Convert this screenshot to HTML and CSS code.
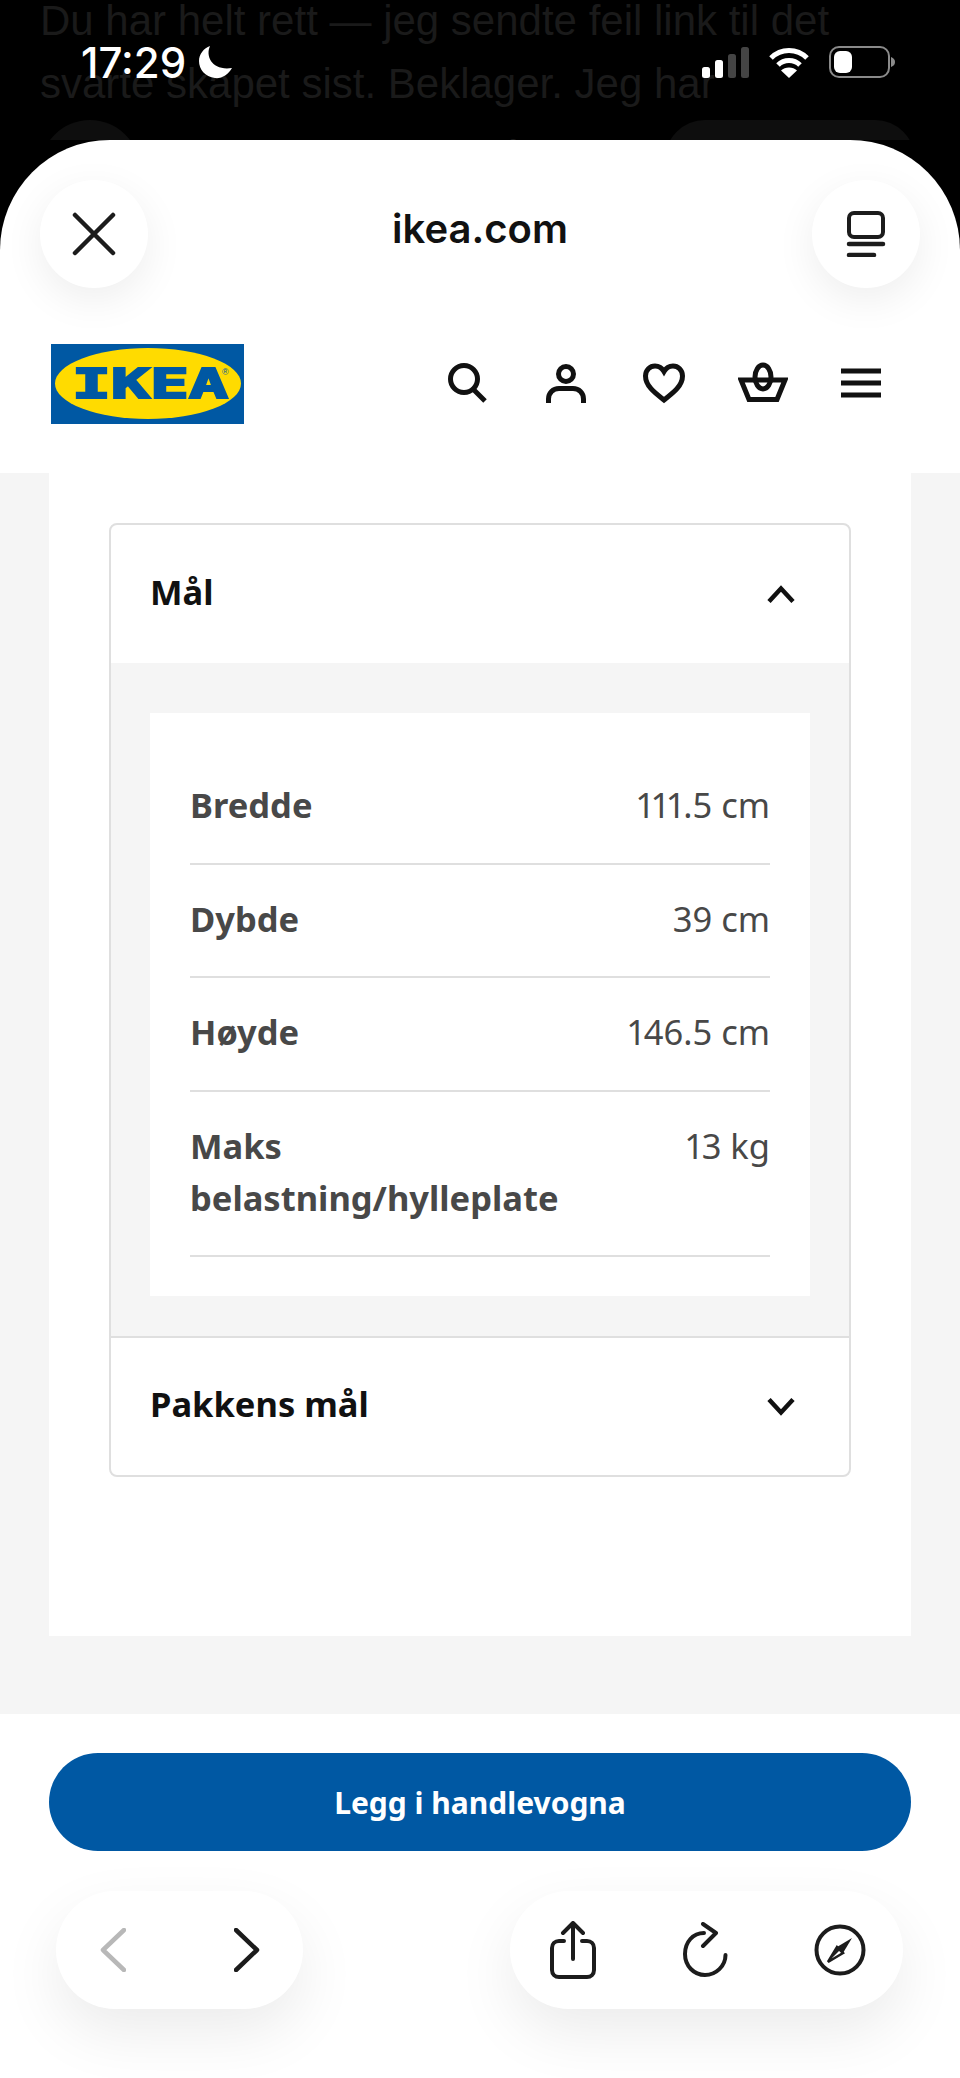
FILE: index.html
```html
<!DOCTYPE html>
<html lang="no">
<head>
  <meta charset="UTF-8" />
  <meta name="viewport" content="width=device-width, initial-scale=1.0" />
  <title>ikea.com</title>
  <link rel="stylesheet" href="styles.css">
</head>
<body>
  <!-- Chat behind the sheet -->
  <div class="backdrop">
    <p class="backdrop-line">Du har helt rett — jeg sendte feil link til det</p>
    <p class="backdrop-line">svarte skapet sist. Beklager. Jeg har</p>
    <div class="backdrop-row">
      <span class="backdrop-dot"></span>
      <p class="backdrop-line">alt i klokt ut IKEA-nå</p>
      <span class="backdrop-pill"></span>
    </div>
  </div>

  <!-- Status bar -->
  <div class="status">
    <div class="status-left">
      <span class="status-time">17:29</span>
      <svg class="moon" width="34" height="34" viewBox="0 0 34 34"><path d="M11 1C6 12 14 26 33 23C29 30 22 34 16 33C6 32 0 24 0 16C0 9 5 3 11 1Z" fill="#fff"/></svg>
    </div>
    <div class="status-right">
      <svg width="47" height="31" viewBox="0 0 47 31">
        <rect x="0" y="20" width="8" height="11" rx="2.5" fill="#fff"/>
        <rect x="13" y="13" width="8" height="18" rx="2.5" fill="#fff"/>
        <rect x="26" y="7" width="8" height="24" rx="2.5" fill="#444"/>
        <rect x="39" y="0" width="8" height="31" rx="2.5" fill="#444"/>
      </svg>
      <svg width="40" height="31" viewBox="0 0 40 31" fill="none" stroke="#fff" stroke-width="5">
        <path d="M2 11C12 1 28 1 38 11"/>
        <path d="M9 18C15 12 25 12 31 18"/>
        <path d="M20 31L12 23.500C16 19.500 24 19.500 28 23.500Z" fill="#fff" stroke="none"/>
      </svg>
      <svg width="66" height="32" viewBox="0 0 66 32">
        <rect x="1" y="1" width="59" height="30" rx="9" fill="none" stroke="#8a8a8a" stroke-width="2"/>
        <rect x="5" y="5" width="18" height="22" rx="6" fill="#fff"/>
        <path d="M62 11C65 12 66 14 66 16C66 18 65 20 62 21Z" fill="#8a8a8a"/>
      </svg>
    </div>
  </div>

  <div class="sheet">
    <!-- Browser top bar -->
    <div class="browser-top">
      <button class="round-btn">
        <svg width="44" height="44" viewBox="0 0 44 44" fill="none" stroke="#1c1c1c" stroke-width="4.500" stroke-linecap="round"><path d="M3 3L41 41M41 3L3 41"/></svg>
      </button>
      <span class="browser-host">ikea.com</span>
      <button class="round-btn">
        <svg width="40" height="46" viewBox="0 0 40 46" fill="none" stroke="#1c1c1c" stroke-width="4" stroke-linecap="round"><rect x="3" y="2" width="34" height="24" rx="5"/><path d="M3 33H37" stroke-width="4.500"/><path d="M3 44H28" stroke-width="4.500"/></svg>
      </button>
    </div>

    <!-- IKEA site header -->
    <header class="site-header">
      <svg class="logo" width="193" height="80" viewBox="0 0 193 80">
        <rect width="193" height="80" fill="#0058a3"/>
        <ellipse cx="97" cy="39.500" rx="93" ry="35.500" fill="#ffdb00"/>
        <text class="logo-text" x="21" y="54" textLength="156" lengthAdjust="spacingAndGlyphs">IKEA</text>
        <text class="logo-mark" x="171" y="31">®</text>
      </svg>
      <nav class="site-icons">
        <svg width="50" height="50" viewBox="0 0 50 50" fill="none" stroke="#111" stroke-width="5"><circle cx="22" cy="20" r="13.500"/><path d="M31 30L43 42"/></svg>
        <svg width="50" height="50" viewBox="0 0 50 50" fill="none" stroke="#111" stroke-width="5"><circle cx="25" cy="15" r="7.500"/><path d="M7.500 44V40C7.500 34 12 29.500 18 29.500H32C38 29.500 42.500 34 42.500 40V44"/></svg>
        <svg width="50" height="50" viewBox="0 0 50 50" fill="none" stroke="#111" stroke-width="5"><path d="M25 41C16 34 6.500 27 6.500 17C6.500 11 11 7 16 7C20 7 23 9 25 12.500C27 9 30 7 34 7C39 7 43.500 11 43.500 17C43.500 27 34 34 25 41Z"/></svg>
        <svg width="50" height="50" viewBox="0 0 50 50" fill="none" stroke="#111" stroke-width="5"><path d="M3 21H47L39 40.500H11Z"/><ellipse cx="25" cy="18" rx="8" ry="12"/></svg>
        <svg width="50" height="50" viewBox="0 0 50 50" fill="#111"><rect x="5" y="9.500" width="40" height="5"/><rect x="5" y="21.500" width="40" height="5"/><rect x="5" y="33.500" width="40" height="5"/></svg>
      </nav>
    </header>

    <!-- Product page -->
    <main class="page">
      <div class="page-card">
        <section class="accordion">
          <div class="accordion-head">
            <h2>Mål</h2>
            <svg width="28" height="18" viewBox="0 0 28 18" fill="none" stroke="#111" stroke-width="4.500"><path d="M2 16.500L14 3.500L26 16.500"/></svg>
          </div>
          <div class="accordion-body">
            <dl class="dims">
              <div class="dim-row"><dt>Bredde</dt><dd>111.5 cm</dd></div>
              <div class="dim-row"><dt>Dybde</dt><dd>39 cm</dd></div>
              <div class="dim-row"><dt>Høyde</dt><dd>146.5 cm</dd></div>
              <div class="dim-row"><dt>Maks belastning/hylleplate</dt><dd>13 kg</dd></div>
            </dl>
          </div>
          <div class="accordion-head accordion-head-closed">
            <h2>Pakkens mål</h2>
            <svg width="28" height="18" viewBox="0 0 28 18" fill="none" stroke="#111" stroke-width="4.500"><path d="M2 1.500L14 14.500L26 1.500"/></svg>
          </div>
        </section>
      </div>
    </main>

    <!-- Bottom bar -->
    <div class="bottom">
      <button class="buy-btn">Legg i handlevogna</button>
      <div class="toolbar">
        <div class="tool-pill tool-pill-nav">
          <span class="tool"><svg width="26" height="44" viewBox="0 0 26 44" fill="none" stroke="#b8b8b8" stroke-width="4.500" stroke-linecap="round" stroke-linejoin="round"><path d="M24 2L3 22L24 42"/></svg></span>
          <span class="tool"><svg width="26" height="44" viewBox="0 0 26 44" fill="none" stroke="#1c1c1c" stroke-width="4.500" stroke-linecap="round" stroke-linejoin="round"><path d="M2 2L23 22L2 42"/></svg></span>
        </div>
        <div class="tool-pill tool-pill-actions">
          <span class="tool"><svg width="46" height="58" viewBox="0 0 46 58" fill="none" stroke="#1c1c1c" stroke-width="4" stroke-linecap="round" stroke-linejoin="round"><path d="M14 20H9C5 20 2 23 2 27V49C2 53 5 56 9 56H37C41 56 44 53 44 49V27C44 23 41 20 37 20H32"/><path d="M23 38V3M13 12L23 2L33 12"/></svg></span>
          <span class="tool"><svg width="50" height="56" viewBox="0 0 50 56" fill="none" stroke="#1c1c1c" stroke-width="4" stroke-linecap="round" stroke-linejoin="round"><path d="M22 11C11 11 3 20 3 32C3 44 12 53 23 53C34 53 43.500 44 43.500 33"/><path d="M21 2L34 11L21 24"/></svg></span>
          <span class="tool"><svg width="52" height="52" viewBox="0 0 52 52"><circle cx="26" cy="26" r="23.500" fill="none" stroke="#1c1c1c" stroke-width="4"/><path d="M38 14L29 29L23 23Z" fill="#1c1c1c"/><path d="M14 38L23 23L29 29Z" fill="none" stroke="#1c1c1c" stroke-width="2.500"/><path d="M14 38L23 23L26 26Z" fill="#1c1c1c"/></svg></span>
        </div>
      </div>
    </div>
  </div>
</body>
</html>
```

FILE: styles.css
```css
* {
  box-sizing: border-box;
}
html, body {
  margin: 0;
  height: 2078px;
  overflow: hidden;
}
body {
  position: relative;
  background-color: #000;
  font-family: "Noto Sans", sans-serif;
}
p, h2, dl, dd {
  margin: 0;
}
button {
  border: 0;
  padding: 0;
  font-family: inherit;
}

/* Chat behind the sheet */
.backdrop {
  height: 140px;
  padding: 0 40px;
  overflow: hidden;
}
.backdrop-line {
  font-family: "Liberation Sans", sans-serif;
  font-size: 42px;
  line-height: 63px;
  margin-top: -11px;
  margin-bottom: 11px;
  color: #1a1a1a;
  white-space: nowrap;
}
.backdrop-row {
  display: flex;
  align-items: flex-start;
  margin-top: -6px;
}
.backdrop-row .backdrop-line {
  margin: 8px 0 0 7px;
  width: 518px;
}
.backdrop-dot {
  width: 100px;
  height: 100px;
  border-radius: 50%;
  background-color: #0e0e0e;
}
.backdrop-pill {
  width: 250px;
  height: 100px;
  border-radius: 40px;
  background-color: #0e0e0e;
}

/* Status bar */
.status {
  position: absolute;
  top: 40px;
  left: 81px;
  right: 65px;
  height: 44px;
  display: flex;
  justify-content: space-between;
  align-items: center;
}
.status-left {
  display: flex;
  align-items: center;
  gap: 13px;
}
.status-time {
  font-family: Inter, sans-serif;
  font-weight: 500;
  font-size: 42px;
  color: #fff;
}
.status-right {
  display: flex;
  align-items: center;
  gap: 20px;
}

/* Sheet */
.sheet {
  height: 1938px;
  background-color: #fff;
  border-radius: 110px 110px 0 0;
  overflow: hidden;
  display: flex;
  flex-direction: column;
}
.browser-top {
  height: 204px;
  padding: 40px 40px 0;
  display: flex;
  justify-content: space-between;
  align-items: flex-start;
}
.round-btn {
  width: 108px;
  height: 108px;
  border-radius: 50%;
  background-color: #fff;
  box-shadow: 0 12px 40px rgba(0, 0, 0, 0.07);
  display: flex;
  align-items: center;
  justify-content: center;
}
.browser-host {
  font-family: Inter, sans-serif;
  font-weight: 600;
  font-size: 40px;
  line-height: 98px;
  color: #111;
}
.site-header {
  height: 129px;
  padding: 0 74px 0 51px;
  display: flex;
  justify-content: space-between;
  align-items: flex-start;
}
.logo {
  display: block;
}
.logo-text {
  font-family: "DejaVu Sans Mono", monospace;
  font-weight: 700;
  font-size: 41px;
  fill: #0058a3;
  stroke: #0058a3;
  stroke-width: 2px;
}
.logo-mark {
  font-family: "Liberation Sans", sans-serif;
  font-size: 9px;
  fill: #0058a3;
}
.site-icons {
  display: flex;
  gap: 48.5px;
  padding-top: 15px;
}

/* Product page */
.page {
  height: 1241px;
  padding: 0 49px 78px;
  background-color: #f5f5f5;
}
.page-card {
  height: 100%;
  padding: 50px 60px 0;
  background-color: #fff;
}
.accordion {
  border: 2px solid #dfdfdf;
  border-radius: 8px;
}
.accordion-head {
  height: 138px;
  padding: 0 54px 0 39px;
  display: flex;
  justify-content: space-between;
  align-items: center;
  border-radius: 8px;
}
.accordion-head h2 {
  font-size: 34.5px;
  font-weight: 700;
  line-height: 48px;
  margin-top: -5px;
  color: #111;
}
.accordion-head-closed {
  height: 139px;
  border-top: 2px solid #dfdfdf;
  border-radius: 0;
}
.accordion-body {
  padding: 50px 39px 40px;
  background-color: #f5f5f5;
}
.dims {
  padding: 38px 40px 39px;
  background-color: #fff;
}
.dim-row {
  display: flex;
  justify-content: space-between;
  padding: 28px 0 31.5px;
  border-bottom: 2px solid #dfdfdf;
  font-size: 34.5px;
  font-variant-numeric: proportional-nums;
  line-height: 52px;
  color: #484848;
}
.dim-row dt {
  width: 400px;
  font-weight: 700;
}

/* Bottom bar */
.bottom {
  flex: 1;
  padding: 39px 49px 0;
  background-color: #fff;
}
.buy-btn {
  display: block;
  width: 100%;
  height: 98px;
  border-radius: 49px;
  background-color: #0058a3;
  color: #fff;
  font-size: 30px;
  font-weight: 700;
}
.toolbar {
  display: flex;
  justify-content: space-between;
  padding: 40px 8px 0 7px;
}
.tool-pill {
  height: 118px;
  border-radius: 59px;
  background-color: #fff;
  box-shadow: 0 24px 60px rgba(0, 0, 0, 0.08);
  display: flex;
  justify-content: space-between;
  align-items: center;
}
.tool-pill-nav {
  width: 247px;
  padding: 0 26px 0 27px;
}
.tool-pill-actions {
  width: 393px;
  padding: 0 33px;
}
.tool {
  width: 60px;
  display: flex;
  justify-content: center;
}
```
